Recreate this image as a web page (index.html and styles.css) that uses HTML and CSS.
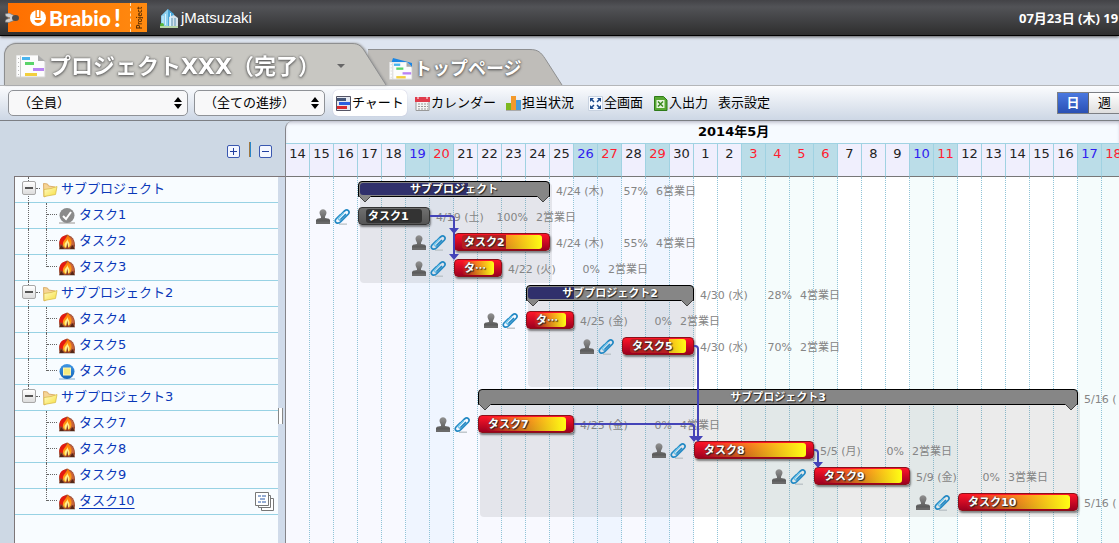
FILE: index.html
```html
<!DOCTYPE html>
<html lang="ja">
<head>
<meta charset="utf-8">
<title>Brabio! Project</title>
<link rel="stylesheet" href="styles.css">
</head>
<body>
<svg class="defs" aria-hidden="true">
  <defs>
    <linearGradient id="g-fold" x1="0" y1="0" x2="1" y2="1"><stop offset="0" stop-color="#fffbd0"/><stop offset="1" stop-color="#f7e03c"/></linearGradient>
    <linearGradient id="g-stamp" x1="0" y1="0" x2="0" y2="1"><stop offset="0" stop-color="#929292"/><stop offset="1" stop-color="#4c4c4c"/></linearGradient>
    <linearGradient id="g-blue" x1="0" y1="0" x2="0" y2="1"><stop offset="0" stop-color="#3f97e6"/><stop offset="1" stop-color="#1464b8"/></linearGradient>
    <linearGradient id="g-flame" x1="0" y1="0" x2="0" y2="1"><stop offset="0" stop-color="#ff6a00"/><stop offset="1" stop-color="#ffb820"/></linearGradient>
    <symbol id="fire" viewBox="0 0 16 16">
      <rect x="0" y="14" width="16" height="2" fill="#c9c5c2"/>
      <path d="M.5 15C-.5 10 0 5 4 2.500L8 .5l4 2c4 3 4.500 8 3.500 12.500z" fill="#9a4a30"/>
      <path d="M.5 10C0 6 2 2 7 1.500L6.500 6 4 11z" fill="#e41a10"/>
      <path d="M10 2.500c4 1.500 5 4.500 5 8l-2 2-2-5z" fill="#c8643c"/>
      <path d="M9 0c0 3 3.500 4 3.500 8 0 3.500-1.500 6-4.500 6-3 0-4.500-2-4-5C4.500 6 8 4 9 0z" fill="url(#g-flame)"/>
      <path d="M8.500 5c0 2 2 3.500 2 5.500s-1 3-2.500 3-2.500-1-2.500-3S8 7.500 8.500 5z" fill="#fff08a"/>
      <path d="M8.300 8.500l1.200 6.500H7z" fill="#8a3a24"/>
      <path d="M.5 15l1.500-4 3 4zM11 15l2.500-4 2 4z" fill="#542616"/>
    </symbol>
    <symbol id="done" viewBox="0 0 16 16"><rect x="0" y="14" width="16" height="2" fill="#c8c8c8"/><circle cx="8" cy="7.500" r="7.500" fill="#8b8b8b"/><path d="M4 8l3 3 5-7" fill="none" stroke="#fff" stroke-width="2"/></symbol>
    <symbol id="stop" viewBox="0 0 16 16"><rect x="0" y="14" width="16" height="2" fill="#b9d2e6"/><circle cx="8" cy="7.500" r="7.500" fill="url(#g-blue)"/><rect x="4.500" y="4" width="7" height="7" fill="#f5ea7c" stroke="#fff6b0"/></symbol>
    <symbol id="folder" viewBox="0 0 16 16"><path d="M1.500 1.500l4 .5 1 2 6.500 1v4l-11 6z" fill="#f6d596" stroke="#dcae6c"/><path d="M2 14.500V7.500L9 6.500 15 4.500l-1.500 8z" fill="url(#g-fold)" stroke="#d9bd4a" stroke-width=".8"/></symbol>
    <symbol id="stamp" viewBox="0 0 14 16"><path d="M3.500 3.800C3.500-1 10.500-1 10.500 3.800c0 2.200-1.800 3-1.500 5.200l4 .8 1 1.200v4H0v-4l1-1.200L5 9c.3-2.200-1.500-3-1.500-5.200z" fill="url(#g-stamp)"/><path d="M0 12.500h14V15H0z" fill="#6a6a6a"/></symbol>
    <symbol id="clip" viewBox="0 0 16 16"><path d="M5 15.200h8" stroke="#b8c0c4" stroke-width="1.300"/><g fill="none" stroke-linecap="round"><path d="M4 8.500l6.500-6.500c3-2.500 6 .5 3.700 3.300L7 12.500c-3.500 3.500-7.500.5-5-2.500l4-4M6 11l5.500-5.500" stroke="#2389c4" stroke-width="1.700"/><path d="M9.500 4L4.500 9c-1 1.200.3 2.300 1.500 1.300" stroke="#74c8ec" stroke-width="1.300"/></g></symbol>
    <symbol id="gantt" viewBox="0 0 30 23"><path d="M0 0h22l7 7v15H0z" fill="#fcfcfc" stroke="#d4d4d4"/><path d="M22 0v6h7z" fill="#aaa"/><path d="M4.500 1v21" stroke="#ccc"/><path d="M2.500 3v18" stroke="#bbb" stroke-dasharray="1 3"/><rect x="6" y="2" width="8" height="3" fill="#4ab4ee"/><rect x="9" y="7" width="9" height="3" fill="#5ad46a"/><rect x="17" y="13" width="11" height="3" fill="#b983f4"/><rect x="9" y="18" width="12" height="3" fill="#f2cf3e"/></symbol>
  </defs>
</svg>

<header class="topbar">
  <a class="logo" href="#" aria-label="Brabio! Project">
    <svg class="rivet" viewBox="0 0 14 10"><path d="M0 1l4-1 6 3v4L4 9.500 0 9l1-2.500L5 5 1 3.500z" fill="#d0d0d0" stroke="#777" stroke-width=".7"/><ellipse cx="10.500" cy="5" rx="3.500" ry="3" fill="#4c4a48"/></svg>
    <svg class="mark" viewBox="0 0 16 16"><circle cx="8" cy="8" r="8" fill="#fff"/><path d="M5.500 0h5v8h-5z" fill="#ff7c04"/><path d="M6.800 0h2.400v7H6.800z" fill="#fff"/><path d="M4.500 10h7c0 4-7 4-7 0z" fill="#ff7c04"/></svg>
    <span class="brand">Brabio<b>!</b></span>
    <span class="edition">Project</span>
  </a>
  <a class="user" href="#">
    <svg viewBox="0 0 20 20"><path d="M2 8l7-7 6 5v12H2z" fill="#4aa6d8"/><path d="M2 8l7-7v17H2z" fill="#8ed0ee"/><path d="M10 9l5-2 4 3v9h-9z" fill="#d5e2ea"/><path d="M4 8v9M6.500 6v11M11.500 5v13" stroke="#d8f2ff" stroke-width="1"/><path d="M13 10v8M16 10v8" stroke="#5d95b6"/><circle cx="3" cy="17" r="2" fill="#55b83a"/><path d="M1 19h18" stroke="#b8d6a8" stroke-width="2"/></svg>
    <span>jMatsuzaki</span>
  </a>
  <time class="clock">07月23日 (木) 19</time>
</header>

<nav class="tabs">
  <div class="tab current">
    <a class="face" href="#"><svg class="tab-icon" viewBox="0 0 30 23"><use href="#gantt"/></svg><span>プロジェクトXXX（完了）</span></a>
    <button class="more" aria-label="メニュー"><svg viewBox="0 0 8 4"><path d="M0 0h8L4 4z" fill="#666"/></svg></button>
    <svg class="slope" viewBox="0 0 36 42" preserveAspectRatio="none"><path d="M0 .5c7 0 10 3 14 10L34 42H0z" fill="#c8c7c2"/><path d="M0 .5c7 0 10 3 14 10L34 42" fill="none" stroke="#8e8f90"/></svg>
  </div>
  <div class="tab other">
    <a class="face" href="#"><svg class="tab-icon" viewBox="0 0 24 22"><path d="M4 0l19 5v6L2 6z" fill="#1c86e4"/><svg y="4" width="24" height="18" viewBox="0 0 30 23"><use href="#gantt"/></svg></svg><span>トップページ</span></a>
    <svg class="slope" viewBox="0 0 36 36" preserveAspectRatio="none"><path d="M0 .5c8 0 11 3 15 9L32 36H0z" fill="#bfbdb9"/><path d="M0 .5c8 0 11 3 15 9L32 36" fill="none" stroke="#8e8f90"/></svg>
  </div>
</nav>

<div class="toolbar">
  <label class="pick members"><select aria-label="担当者"><option>（全員）</option></select><svg viewBox="0 0 8 12"><path d="M4 0l4 5H0zM4 12l4-5H0z"/></svg></label>
  <label class="pick progress-filter"><select aria-label="進捗"><option>（全ての進捗）</option></select><svg viewBox="0 0 8 12"><path d="M4 0l4 5H0zM4 12l4-5H0z"/></svg></label>
  <div class="tools">
    <button class="tool active"><svg viewBox="0 0 15 15"><path d="M.5.5h14v14H.5z" fill="#e4e8f0" stroke="#556"/><path d="M1 2h9v3H1z" fill="#445577"/><path d="M3 6h11v3H3z" fill="#2a5ee0"/><path d="M1 10h10v3H1z" fill="#d82a30"/></svg>チャート</button>
    <button class="tool"><svg viewBox="0 0 15 15"><path d="M1 2h13v12.500H1z" fill="#f4f4f4" stroke="#999"/><path d="M0 1h15v5H0z" fill="#e03c4c"/><path d="M3 0v3M12 0v3" stroke="#fff"/><path d="M3 8h10M3 10.500h10M3 13h10" stroke="#999" stroke-dasharray="2 1"/></svg>カレンダー</button>
    <button class="tool"><svg viewBox="0 0 15 15"><path d="M0 7h5v7H0z" fill="#7cb820"/><path d="M5 0h5v14H5z" fill="#f39a2c"/><path d="M10 4h5v10h-5z" fill="#4c9cd8"/><path d="M0 14.500h15" stroke="#aaa"/></svg>担当状況</button>
    <button class="tool wide"><svg viewBox="0 0 15 15"><path d="M.5.5h14v14H.5z" fill="#f7faff" stroke="#c8d2e0"/><path d="M2 2h4L2 6zM13 2v4L9 2zM2 13V9l4 4zM13 13H9l4-4z" fill="#1c4a8c"/><path d="M3 3l3 3M12 3L9 6M3 12l3-3M12 12L9 9" stroke="#1c4a8c" stroke-width="1.500"/></svg>全画面</button>
    <button class="tool"><svg viewBox="0 0 15 15"><path d="M1.500.5h9L14 4v10.500H1.500z" fill="#58a832" stroke="#2e7a18"/><path d="M3.500 4h8v8h-8z" fill="#e9f6e0"/><path d="M5 5.500l5 5M10 5.500l-5 5" stroke="#3a8a20" stroke-width="1.500"/></svg>入出力</button>
    <button class="tool">表示設定</button>
  </div>
  <div class="scale"><button class="on">日</button><button>週</button></div>
</div>

<main class="work">
  <section class="side">
    <div class="fold-all">
      <button aria-label="すべて開く"><svg viewBox="0 0 9 9"><path d="M1 4.500h7M4.500 1v7"/></svg></button><i></i><button aria-label="すべて閉じる"><svg viewBox="0 0 9 9"><path d="M1 4.500h7"/></svg></button>
    </div>
    <div class="panes">
      <ul class="tree">
        <li class="group"><button class="toggle" aria-label="閉じる"></button><svg class="icon"><use href="#folder"/></svg><a href="#">サブプロジェクト</a></li>
        <li class="task"><svg class="icon"><use href="#done"/></svg><a href="#">タスク1</a></li>
        <li class="task"><svg class="icon"><use href="#fire"/></svg><a href="#">タスク2</a></li>
        <li class="task end"><svg class="icon"><use href="#fire"/></svg><a href="#">タスク3</a></li>
        <li class="group"><button class="toggle" aria-label="閉じる"></button><svg class="icon"><use href="#folder"/></svg><a href="#">サブプロジェクト2</a></li>
        <li class="task"><svg class="icon"><use href="#fire"/></svg><a href="#">タスク4</a></li>
        <li class="task"><svg class="icon"><use href="#fire"/></svg><a href="#">タスク5</a></li>
        <li class="task end"><svg class="icon"><use href="#stop"/></svg><a href="#">タスク6</a></li>
        <li class="group final"><button class="toggle" aria-label="閉じる"></button><svg class="icon"><use href="#folder"/></svg><a href="#">サブプロジェクト3</a></li>
        <li class="task loose"><svg class="icon"><use href="#fire"/></svg><a href="#">タスク7</a></li>
        <li class="task loose"><svg class="icon"><use href="#fire"/></svg><a href="#">タスク8</a></li>
        <li class="task loose"><svg class="icon"><use href="#fire"/></svg><a href="#">タスク9</a></li>
        <li class="task loose end hover"><svg class="icon"><use href="#fire"/></svg><a href="#">タスク10</a>
          <button class="notes" aria-label="詳細"><svg viewBox="0 0 20 20"><g fill="#fff" stroke="#777"><path d="M6.500 6.500h12v12h-12z"/><path d="M3.500 3.500h12v12h-12z"/><path d="M.5.5h13v13H.5z"/></g><path d="M3 4h3M7 4h4M5 7h5M3 10h3M7 10h4" stroke="#2c5aa8"/></svg></button></li>
      </ul>
      <div class="splitter"><i></i></div>
    </div>
  </section>

  <section class="chart">
    <div class="months"><span class="month april"></span><span class="month may">2014年5月</span></div>
    <div class="days">
      <div class="day"><b>14</b></div><div class="day"><b>15</b></div><div class="day"><b>16</b></div><div class="day"><b>17</b></div><div class="day"><b>18</b></div>
      <div class="day off sat"><b>19</b></div><div class="day off"><b>20</b></div>
      <div class="day"><b>21</b></div><div class="day"><b>22</b></div><div class="day"><b>23</b></div><div class="day"><b>24</b></div><div class="day"><b>25</b></div>
      <div class="day off sat"><b>26</b></div><div class="day off"><b>27</b></div>
      <div class="day"><b>28</b></div><div class="day off"><b>29</b></div><div class="day"><b>30</b></div>
      <div class="day next"><b>1</b></div><div class="day next"><b>2</b></div>
      <div class="day next off"><b>3</b></div><div class="day next off"><b>4</b></div><div class="day next off"><b>5</b></div><div class="day next off"><b>6</b></div>
      <div class="day next"><b>7</b></div><div class="day next"><b>8</b></div><div class="day next"><b>9</b></div>
      <div class="day next off sat"><b>10</b></div><div class="day next off"><b>11</b></div>
      <div class="day next"><b>12</b></div><div class="day next"><b>13</b></div><div class="day next"><b>14</b></div><div class="day next"><b>15</b></div><div class="day next"><b>16</b></div>
      <div class="day next off sat"><b>17</b></div><div class="day next off"><b>18</b></div>
    </div>
    <div class="canvas">
      <div class="shade" style="--start:3;--days:8;--row:0;--rows:4"></div>
      <div class="shade" style="--start:10;--days:7;--row:4;--rows:4"></div>
      <div class="shade" style="--start:8;--days:25;--row:8;--rows:5"></div>

      <div class="item sum" style="--start:3;--days:8;--row:0;--done:57%">
        <div class="bar"><i></i><span>サブプロジェクト</span></div>
        <svg class="foot left" viewBox="0 0 14 7"><path d="M1 0l6 6 6-6"/></svg><svg class="foot right" viewBox="0 0 14 7"><path d="M1 0l6 6 6-6"/></svg>
        <div class="meta"><span>4/24 (木)</span><span>57%</span><span>6営業日</span></div>
      </div>
      <div class="item work-item closed" style="--start:3;--days:3;--row:1;--done:100%">
        <div class="badges"><svg class="st"><use href="#stamp"/></svg><svg class="cl"><use href="#clip"/></svg></div>
        <div class="bar"><i></i><span>タスク1</span></div>
        <div class="meta"><span>4/19 (土)</span><span>100%</span><span>2営業日</span></div>
      </div>
      <div class="item work-item" style="--start:7;--days:4;--row:2;--done:55%">
        <div class="badges"><svg class="st"><use href="#stamp"/></svg><svg class="cl"><use href="#clip"/></svg></div>
        <div class="bar"><i></i><span>タスク2</span></div>
        <div class="meta"><span>4/24 (木)</span><span>55%</span><span>4営業日</span></div>
      </div>
      <div class="item work-item" style="--start:7;--days:2;--row:3;--done:0%">
        <div class="badges"><svg class="st"><use href="#stamp"/></svg><svg class="cl"><use href="#clip"/></svg></div>
        <div class="bar"><i></i><span class="short">タ…</span></div>
        <div class="meta"><span>4/22 (火)</span><span>0%</span><span>2営業日</span></div>
      </div>
      <div class="item sum" style="--start:10;--days:7;--row:4;--done:28%">
        <div class="bar"><i></i><span>サブプロジェクト2</span></div>
        <svg class="foot left" viewBox="0 0 14 7"><path d="M1 0l6 6 6-6"/></svg><svg class="foot right" viewBox="0 0 14 7"><path d="M1 0l6 6 6-6"/></svg>
        <div class="meta"><span>4/30 (水)</span><span>28%</span><span>4営業日</span></div>
      </div>
      <div class="item work-item" style="--start:10;--days:2;--row:5;--done:0%">
        <div class="badges"><svg class="st"><use href="#stamp"/></svg><svg class="cl"><use href="#clip"/></svg></div>
        <div class="bar"><i></i><span class="short">タ…</span></div>
        <div class="meta"><span>4/25 (金)</span><span>0%</span><span>2営業日</span></div>
      </div>
      <div class="item work-item" style="--start:14;--days:3;--row:6;--done:70%">
        <div class="badges"><svg class="st"><use href="#stamp"/></svg><svg class="cl"><use href="#clip"/></svg></div>
        <div class="bar"><i></i><span>タスク5</span></div>
        <div class="meta"><span>4/30 (水)</span><span>70%</span><span>2営業日</span></div>
      </div>
      <div class="item sum" style="--start:8;--days:25;--row:8;--done:0%">
        <div class="bar"><i></i><span>サブプロジェクト3</span></div>
        <svg class="foot left" viewBox="0 0 14 7"><path d="M1 0l6 6 6-6"/></svg><svg class="foot right" viewBox="0 0 14 7"><path d="M1 0l6 6 6-6"/></svg>
        <div class="meta"><span>5/16 (</span></div>
      </div>
      <div class="item work-item" style="--start:8;--days:4;--row:9;--done:0%">
        <div class="badges"><svg class="st"><use href="#stamp"/></svg><svg class="cl"><use href="#clip"/></svg></div>
        <div class="bar"><i></i><span>タスク7</span></div>
        <div class="meta"><span>4/25 (金)</span><span>0%</span><span>4営業日</span></div>
      </div>
      <div class="item work-item" style="--start:17;--days:5;--row:10;--done:0%">
        <div class="badges"><svg class="st"><use href="#stamp"/></svg><svg class="cl"><use href="#clip"/></svg></div>
        <div class="bar"><i></i><span>タスク8</span></div>
        <div class="meta near"><span>5/5 (月)</span><span>0%</span><span>2営業日</span></div>
      </div>
      <div class="item work-item" style="--start:22;--days:4;--row:11;--done:0%">
        <div class="badges"><svg class="st"><use href="#stamp"/></svg><svg class="cl"><use href="#clip"/></svg></div>
        <div class="bar"><i></i><span>タスク9</span></div>
        <div class="meta near"><span>5/9 (金)</span><span>0%</span><span>3営業日</span></div>
      </div>
      <div class="item work-item" style="--start:28;--days:5;--row:12;--done:0%">
        <div class="badges"><svg class="st"><use href="#stamp"/></svg><svg class="cl"><use href="#clip"/></svg></div>
        <div class="bar"><i></i><span>タスク10</span></div>
        <div class="meta"><span>5/16 (</span></div>
      </div>

      <svg class="links" width="840" height="338" viewBox="0 0 840 338">
        <path class="wire" d="M144 39h21q3 0 3 3v36M408 169h1q3 0 3 3v88M288 247h117q3 0 3 3v10M528 273h1q3 0 3 3v12"/>
        <path class="head" d="M163 51h10l-5 6zM163 77h10l-5 6zM407 259h10l-5 6zM403 259h10l-5 6zM527 285h10l-5 6z"/>
      </svg>
    </div>
  </section>
</main>
</body>
</html>
```

FILE: styles.css
```css
* { box-sizing: border-box; }
body {
  margin: 0;
  height: 100vh;
  overflow: hidden;
  display: flex;
  flex-direction: column;
  background: #dee5f0;
  color: #000;
  font: 13px/20px "DejaVu Sans", "Noto Sans CJK JP", sans-serif;
}
a { color: inherit; text-decoration: none; }
button { margin: 0; padding: 0; border: 0; background: none; color: inherit; font: inherit; }
svg { display: block; flex: none; }
.defs { position: absolute; width: 0; height: 0; }

/* top bar */
.topbar {
  position: relative;
  z-index: 3;
  flex: none;
  display: flex;
  align-items: center;
  height: 36px;
  padding-left: 8px;
  background: linear-gradient(#434347, #525357 20%, #2e2e2e);
  border-bottom: 1px solid #000;
  box-shadow: 0 1px 3px #555;
  color: #fff;
}
.logo {
  position: relative;
  display: flex;
  align-items: center;
  width: 139px;
  height: 29px;
  padding-left: 22px;
  background: linear-gradient(90deg, #ff6f00, #ff8a10);
}
.rivet { position: absolute; left: -3px; top: 10px; width: 14px; height: 10px; }
.mark { width: 16px; height: 16px; }
.brand { display: flex; align-items: center; gap: 3px; margin-left: 3px; font: 900 21px/29px Lato, sans-serif; }
.brand b { font-size: 24px; font-weight: 900; }
.edition {
  margin-left: auto;
  width: 17px;
  height: 29px;
  border-right: 1px dashed #ffe0b8;
  writing-mode: vertical-rl;
  transform: rotate(180deg);
  text-align: center;
  color: #4a2500;
  font: bold 7px/16px Lato, sans-serif;
}
.user { display: flex; align-items: center; gap: 2px; margin-left: 12px; font: 15px/20px "Liberation Sans", sans-serif; }
.user svg { width: 20px; height: 20px; }
.clock { position: absolute; left: 1019px; font: bold 13px/20px "Noto Sans", "Noto Sans CJK JP", sans-serif; white-space: nowrap; }

/* tabs */
.tabs { flex: none; display: flex; align-items: flex-end; height: 49px; padding-left: 4px; }
.tab { display: flex; color: #fff; font-weight: bold; white-space: nowrap; text-shadow: 0 0 2px #555, 0 1px 3px #555; }
.current { position: relative; z-index: 2; height: 42px; filter: drop-shadow(1px 0 1px #999); }
.current .face {
  display: flex; align-items: center; gap: 3px;
  padding: 4px 0 0 11px;
  background: #c8c7c2;
  border: 1px solid #8e8f90; border-width: 1px 0 0 1px;
  border-radius: 12px 0 0 0;
  font-size: 22px;
}
.current .tab-icon { width: 30px; height: 23px; }
.more { display: flex; align-items: center; width: 32px; padding: 2px 0 0 17px; background: #c8c7c2; border-top: 1px solid #8e8f90; }
.more svg { width: 8px; height: 4px; }
.slope { width: 36px; height: 100%; }
.other { height: 36px; margin-left: -20px; }
.other .face {
  display: flex; align-items: center; gap: 1px;
  padding: 2px 8px 0 21px;
  background: #bfbdb9;
  border-top: 1px solid #8e8f90;
  font-size: 18px;
}
.other .tab-icon { width: 24px; height: 22px; }

/* toolbar */
.toolbar {
  flex: none;
  position: relative;
  display: flex;
  align-items: center;
  height: 36px;
  padding-left: 8px;
  background: linear-gradient(#fbfcfe, #cdd7e5);
  border-top: 1px solid #b4b6b9;
  border-bottom: 1px solid #7c7f84;
  overflow: hidden;
}
.pick { position: relative; flex: none; margin-right: 6px; }
.pick select {
  appearance: none;
  width: 100%; height: 26px;
  padding: 0 9px;
  border: 1px solid #8f9297; border-radius: 5px;
  background: #f8f8f9;
  color: #000;
  font: 13px/24px "DejaVu Sans", "Noto Sans CJK JP", sans-serif;
}
.pick svg { position: absolute; right: 6px; top: 7px; width: 8px; height: 12px; pointer-events: none; }
.members { width: 180px; }
.progress-filter { width: 131px; }
.tools { flex: none; display: flex; gap: 10px; margin-left: 2px; }
.tool { display: flex; align-items: center; flex: none; height: 26px; white-space: nowrap; }
.tool svg { width: 15px; height: 15px; margin-right: 1px; }
.tool.active { margin-right: -2px; padding: 0 3px; border-radius: 5px; background: #fff; box-shadow: 0 0 1px #aac; }
.tool.wide { margin-left: 4px; }
.scale { position: absolute; left: 1057px; display: flex; height: 22px; border: 1px solid #7c7f84; background: linear-gradient(#fff, #dedede); }
.scale button { width: 31px; }
.scale .on { background: linear-gradient(#4a78e0, #2a50b4); border-right: 1px solid #666; color: #fff; font-weight: bold; }

/* work area */
.work { flex: 1; min-height: 0; display: flex; background: #cdd8e4; }
.side { flex: none; width: 285px; display: flex; flex-direction: column; }
.fold-all { display: flex; align-items: center; justify-content: flex-end; height: 55px; padding: 6px 13px 0 0; }
.fold-all button { width: 13px; height: 13px; padding: 1px; border: 1px solid #3a58b0; border-radius: 2px; background: #f4f7ff; }
.fold-all svg { width: 9px; height: 9px; fill: none; stroke: #2240a0; }
.fold-all i { width: 2px; height: 15px; margin: -4px 8px 0 9px; background: #2a86c8; border-left: 1px solid #a07840; }
.panes { flex: 1; display: flex; margin-left: 14px; border-top: 1px solid #7d7678; border-left: 1px solid #7d7678; background: #f8fcff; }
.tree { flex: 1; margin: 0; padding: 0; list-style: none; color: #0a38b8; }
.tree li { position: relative; display: flex; align-items: center; height: 26px; border-bottom: 1px solid #98d2e4; }
.tree li > a { margin-bottom: 2px; }
.group { padding-left: 7px; }
.group::before { content: ""; position: absolute; left: 13px; top: 0; bottom: -1px; border-left: 1px dotted #666; }
.group.final::before { bottom: 13px; }
.toggle { position: relative; width: 14px; height: 14px; margin-bottom: 3px; border: 1px solid #a8a8a8; border-radius: 2px; background: linear-gradient(#fff, #ddd); }
.toggle::before { content: ""; position: absolute; left: 2px; top: 5px; width: 8px; height: 2px; background: #555; }
.toggle::after { content: ""; position: absolute; left: 13px; top: 6px; width: 4px; border-top: 1px dotted #666; }
.icon { width: 16px; height: 16px; }
.group .icon { width: 16px; height: 16px; margin: 0 3px 0 6px; }
.task { padding-left: 44px; }
.task::before { content: ""; position: absolute; left: 31px; top: 0; bottom: -1px; border-left: 1px dotted #666; }
.task::after { content: ""; position: absolute; left: 32px; top: 11px; width: 10px; border-top: 1px dotted #666; }
.task.end::before { bottom: 13px; }
.task .icon { margin-right: 4px; }
.task:not(.loose) > a::before { content: ""; position: absolute; left: 13px; top: 0; bottom: -1px; border-left: 1px dotted #666; }
.hover > a { text-decoration: underline; text-underline-offset: 3px; }
.notes { margin-left: auto; margin-right: 3px; }
.notes svg { width: 20px; height: 20px; }
.splitter { position: relative; width: 7px; background: #d0dbea; }
.splitter i { position: absolute; left: 0; top: 231px; width: 5px; height: 16px; background: #fff; border: solid #888; border-width: 0 1px; }

/* chart */
.chart {
  position: relative;
  flex: 1; min-width: 0;
  display: flex; flex-direction: column;
  overflow: hidden;
  border-left: 1px solid #85858a;
  border-top-left-radius: 8px;
  background: #f6faff;
}
.months { flex: none; display: flex; height: 22px; box-shadow: inset 0 3px 4px -2px #aab; font-weight: bold; line-height: 22px; }
.april { flex: none; width: 408px; }
.may { padding-left: 4px; }
.days { flex: 1; display: flex; }
.day { flex: none; width: 24px; display: flex; flex-direction: column; background: #f8f9ff; }
.day::after { content: ""; flex: 1; border-right: 1px dotted #90c4d8; }
.day b {
  height: 34px;
  border: 1px solid #a0d2e2; border-width: 1px 1px 0 0;
  border-bottom: 1px solid #777;
  background: #f0effd;
  color: #222;
  font-weight: normal;
  line-height: 20px;
  text-align: center;
}
.day.next { background: #fff; }
.day.off { background: #eff5ff; }
.day.next.off { background: #f5fcfc; }
.day.off b { background: #bbdde8; color: #ff2030; }
.day.sat b { color: #3020f0; }
.canvas { position: absolute; left: 0; top: 56px; right: 0; bottom: 0; overflow: hidden; }
.shade {
  position: absolute;
  left: calc(var(--start) * 24px + 2px);
  top: calc(var(--row) * 26px + 6px);
  width: calc(var(--days) * 24px);
  height: calc(var(--rows) * 26px - 4px);
  border-radius: 4px;
  background: rgba(90, 90, 90, .12);
}
.item {
  position: absolute;
  left: calc(var(--start) * 24px);
  top: calc(var(--row) * 26px);
  width: calc(var(--days) * 24px);
  height: 26px;
  padding-top: 4px;
}
.bar { position: relative; color: #fff; font-size: 11px; font-weight: bold; white-space: nowrap; text-shadow: 1px 1px 1px #222, 0 0 1px #333; }
.bar span { position: relative; }
.sum .bar { height: 16px; border: 1px solid #000; border-radius: 4px 4px 0 0; background: #868686; text-align: center; line-height: 15px; }
.sum .bar i { position: absolute; left: 1px; top: 1px; bottom: 1px; width: var(--done); border-radius: 3px 0 0 3px; background: #30306c; }
.foot { position: absolute; top: 19px; width: 14px; height: 7px; fill: #868686; stroke: #444; }
.foot.left { left: 0; }
.foot.right { right: 0; }
.work-item .bar {
  height: 18px;
  padding: 0 8px 0 9px;
  border: 1px solid #8c1018; border-radius: 4px;
  background: linear-gradient(#ff1428, #9c0020);
  box-shadow: 1px 2px 2px rgba(0, 0, 0, .45);
  line-height: 17px;
}
.work-item .bar i {
  position: absolute; left: 7px; right: 7px; top: 1px; bottom: 1px;
  overflow: hidden;
  border-radius: 3px;
  background: linear-gradient(90deg, rgba(255, 255, 20, 0), #ffff14);
}
.work-item .bar i::before { content: ""; display: block; width: var(--done); height: 100%; background: #b42020; }
.closed .bar { border-color: #333; background: linear-gradient(#707070, #555); }
.closed .bar i::before { background: #333; }
.short { font-family: "Noto Sans CJK JP", sans-serif; line-height: 14px; }
.badges { position: absolute; right: 100%; top: 6px; display: flex; gap: 4px; padding-right: 8px; }
.st { width: 14px; height: 16px; }
.cl { width: 16px; height: 16px; }
.meta { position: absolute; left: 100%; top: 0; display: flex; padding-left: 6px; color: #858585; font-size: 11px; line-height: 29px; white-space: nowrap; }
.meta span:nth-child(1) { width: 52px; }
.meta span:nth-child(2) { width: 40px; text-align: right; }
.meta span:nth-child(3) { margin-left: 8px; }
.meta.near span:nth-child(1) { width: 44px; }
.links { position: absolute; left: 0; top: 0; }
.wire { fill: none; stroke: #4444b8; stroke-width: 2; }
.head { fill: #4444b8; }
```
